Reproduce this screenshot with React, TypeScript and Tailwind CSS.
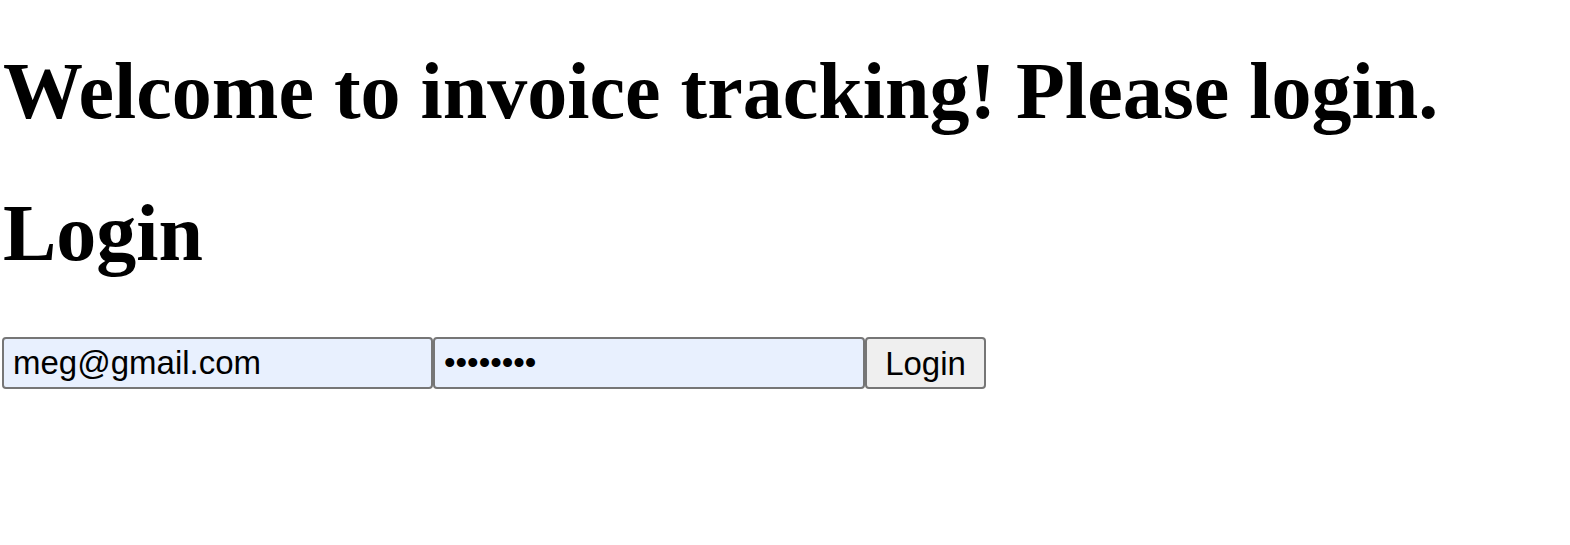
export default function App() {
  return (
    <div className="min-h-screen bg-white text-black font-['Liberation_Serif',serif]">
      <h1 className="text-[80px] font-bold leading-[92px] pt-[45px] pl-[3px] mb-[50px]">
        Welcome to invoice tracking! Please login.
      </h1>
      <h2 className="text-[80px] font-bold leading-[92px] pl-[3px] mb-[58px]">Login</h2>
      <form className="flex items-start pl-[2px] font-['Liberation_Sans',Arial,sans-serif]">
        <input
          type="email"
          defaultValue="meg@gmail.com"
          className="w-[431px] h-[52px] border-2 border-[#767676] rounded-[4px] bg-[#e8f0fe] px-[9px] text-[33px] text-black outline-none"
        />
        <input
          type="password"
          defaultValue="password"
          className="w-[432px] h-[52px] border-2 border-[#767676] rounded-[4px] bg-[#e8f0fe] px-[9px] text-[33px] text-black outline-none"
        />
        <button
          type="button"
          className="w-[121px] h-[52px] border-2 border-[#767676] rounded-[4px] bg-[#efefef] text-[33px] text-black"
        >
          Login
        </button>
      </form>
    </div>
  );
}
